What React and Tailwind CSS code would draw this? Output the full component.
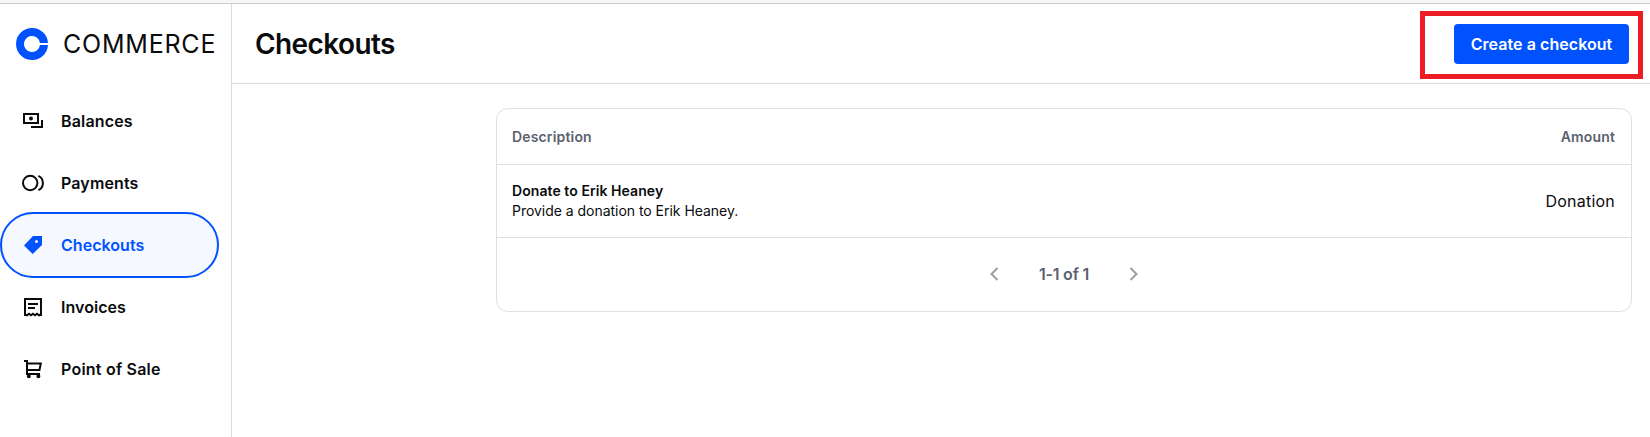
import React from "react";

function BalancesIcon() {
  return (
    <svg width="24" height="24" viewBox="0 0 24 24" fill="none" stroke="currentColor" strokeWidth="2">
      <path d="M3 5h14v9H3zM10 18h11v-7" />
      <circle cx="10" cy="9.5" r="2" fill="currentColor" stroke="none" />
    </svg>
  );
}

function PaymentsIcon() {
  return (
    <svg width="24" height="24" viewBox="0 0 24 24" fill="none" stroke="currentColor" strokeWidth="2">
      <circle cx="9.2" cy="12" r="7.2" />
      <path d="M17.400 4.800a8 8 0 0 1 0 14.400" />
    </svg>
  );
}

function CheckoutsIcon() {
  return (
    <svg width="24" height="24" viewBox="0 0 24 24" fill="currentColor">
      <path d="M12 3h9v9l-9.300 9L3 12.500z" />
      <circle cx="15.500" cy="8.500" r="1.500" fill="#f5f8ff" />
    </svg>
  );
}

function InvoicesIcon() {
  return (
    <svg width="24" height="24" viewBox="0 0 24 24" fill="none" stroke="currentColor" strokeWidth="2">
      <path d="M4 21V4h16v17M4 19.500l2 .8 2-1.600 2 1.600 2-1.600 2 1.600 2-1.600 2 1.600 2-.8M7 9h10M7 13h7" />
    </svg>
  );
}

function CartIcon() {
  return (
    <svg width="24" height="24" viewBox="0 0 24 24" fill="none" stroke="currentColor" strokeWidth="2">
      <path d="M3 4h3v13h13M6 6.500h13.800L18.500 13H6" />
      <circle cx="7.800" cy="19.200" r="1" />
      <circle cx="17.400" cy="19.200" r="1" />
    </svg>
  );
}

const items = [
  { label: "Balances", Icon: BalancesIcon, spacing: "tracking-[0.16px]" },
  { label: "Payments", Icon: PaymentsIcon, spacing: "tracking-[0.12px]" },
  { label: "Checkouts", Icon: CheckoutsIcon, active: true, spacing: "tracking-[0.04px]" },
  { label: "Invoices", Icon: InvoicesIcon, spacing: "tracking-[0.04px]" },
  { label: "Point of Sale", Icon: CartIcon, spacing: "tracking-[0.22px]" },
];

function Sidebar() {
  return (
    <aside className="w-[232px] shrink-0 border-r border-[#dcdcde]">
      <div className="flex h-20 items-center pl-4">
        <svg width="32" height="32" viewBox="0 0 32 32" fill="#0052ff">
          <path d="M16 0A16 16 0 1 0 32 17H23.900A8 8 0 1 1 23.900 15H32A16 16 0 0 0 16 0z" />
        </svg>
        <span className="ml-[15px] whitespace-nowrap text-[25px] leading-8 tracking-[0.78px] text-[#0a0b0d]">
          COMMERCE
        </span>
      </div>
      <nav className="mt-1.5 flex flex-col">
        {items.map(({ label, Icon, active, spacing }) => (
          <a
            key={label}
            className={
              active
                ? "-my-0.5 flex h-[66px] w-[219px] items-center rounded-full border-2 border-[#0052ff] bg-[#f5f8ff] pl-[19px] text-[#0052ff]"
                : "flex h-[62px] w-[219px] items-center pl-[21px] text-[#0a0b0d]"
            }
          >
            <Icon />
            <span className={"ml-4 text-base font-semibold " + spacing}>{label}</span>
          </a>
        ))}
      </nav>
    </aside>
  );
}

function Header() {
  return (
    <header className="flex h-20 items-center justify-between border-b border-[#dcdcde] pl-[23px] pr-[7px]">
      <h1 className="text-[28px] font-semibold leading-9 tracking-[-0.6px] text-[#0a0b0d]">Checkouts</h1>
      <div className="mt-[3px] flex h-[68px] w-[223px] justify-end border-5 border-[#ed1c24] pr-[9px] pt-2">
        <button className="h-10 w-[175px] rounded bg-[#0052ff] text-base font-semibold tracking-[0.06px] text-white">
          Create a checkout
        </button>
      </div>
    </header>
  );
}

function CheckoutTable() {
  return (
    <section className="ml-[264px] mt-6 w-[1136px] rounded-xl border border-[#dcdfe4]">
      <div className="flex h-14 items-center justify-between border-b border-[#dcdfe4] pl-[15px] pr-4 text-sm font-semibold tracking-[0.16px] text-[#5b616e]">
        <span>Description</span>
        <span>Amount</span>
      </div>
      <div className="flex h-[73px] items-center justify-between border-b border-[#dcdfe4] pl-[15px] pr-4 text-[#0a0b0d]">
        <div className="text-sm leading-5">
          <p className="font-semibold tracking-[0.07px]">Donate to Erik Heaney</p>
          <p className="tracking-[-0.03px]">Provide a donation to Erik Heaney.</p>
        </div>
        <span className="text-base tracking-[0.22px]">Donation</span>
      </div>
      <div className="flex h-[73px] items-center justify-center pb-px text-[#5b616e]">
        <svg className="text-[#9b9da2]" width="16" height="16" viewBox="0 0 16 16" fill="none" stroke="currentColor" strokeWidth="2">
          <path d="M10.500 2L4.500 8l6 6" />
        </svg>
        <span className="mx-9 text-base font-semibold tracking-[-0.2px]">1-1 of 1</span>
        <svg className="text-[#9b9da2]" width="16" height="16" viewBox="0 0 16 16" fill="none" stroke="currentColor" strokeWidth="2">
          <path d="M5.500 2l6 6-6 6" />
        </svg>
      </div>
    </section>
  );
}

export default function App() {
  return (
    <div className="flex h-[437px] flex-col overflow-hidden bg-white font-['Inter',sans-serif]">
      <div className="h-1 shrink-0 border-b border-[#cccccf] bg-[#f7f7fa]" />
      <div className="flex flex-1">
        <Sidebar />
        <main className="flex-1">
          <Header />
          <CheckoutTable />
        </main>
      </div>
    </div>
  );
}
